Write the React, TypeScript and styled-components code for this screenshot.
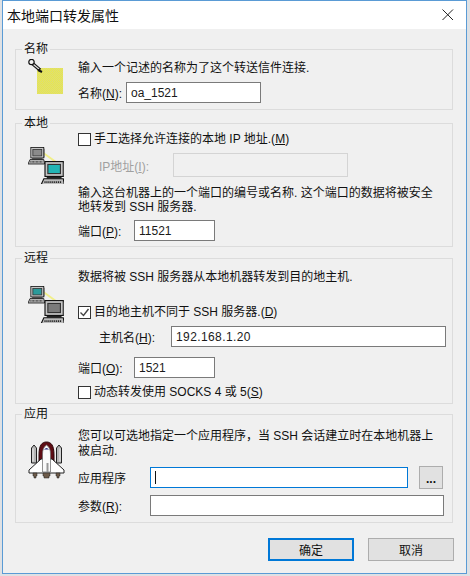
import React from "react";
import styled, { createGlobalStyle } from "styled-components";

const Global = createGlobalStyle`
    html, body { margin: 0; padding: 0; background: #dfe1e4; }
    body {
        font-family: "Liberation Sans", "Noto Sans CJK SC", sans-serif;
        font-size: 12px;
        color: #111;
    }
`;

const Computer: React.FC<{ x: number; y: number; w: number; screen: string }> = ({ x, y, w, screen }) => {
    const s = w / 21;
    return (
        <g transform={`translate(${x} ${y}) scale(${s})`}>
            <rect x="3.5" y="0.5" width="16" height="13" fill="#c6c6c6" stroke="#111" />
            <rect x="6" y="3" width="11" height="8" fill={screen} stroke="#333" />
            <rect x="19.5" y="2" width="1" height="11" fill="#555" />
            <rect x="5" y="14" width="13" height="1.5" fill="#222" />
            <path d="M2.5 15.5h17l1 5.5H0z" fill="#bbb" stroke="#111" />
            <path d="M3 18.5h15" stroke="#222" strokeWidth="1.6" strokeDasharray="1 .7" />
        </g>
    );
};

const ComputersIcon: React.FC<{ remote?: boolean }> = ({ remote }) => (
    <svg width="36" height="37" viewBox="0 0 36 37">
        <path d="M14 5 L32 18" stroke="#f1ef8a" strokeWidth="2" fill="none" />
        <Computer x={0} y={0} w={17} screen={remote ? "#2b9a9a" : "#8b8b8b"} />
        <Computer x={13} y={14} w={24} screen={remote ? "#7b7b7b" : "#22b5b5"} />
    </svg>
);

const NoteIcon = () => (
    <svg width="37" height="37" viewBox="0 0 37 37">
        <defs>
            <pattern id="dither" width="2" height="2" patternUnits="userSpaceOnUse">
                <rect width="2" height="2" fill="#e9e84c" />
                <rect width="1" height="1" fill="#dcdc78" />
                <rect x="1" y="1" width="1" height="1" fill="#dcdc78" />
            </pattern>
        </defs>
        <rect x="9" y="9" width="26" height="26" fill="url(#dither)" />
        <path d="M5 5 L12 11" stroke="#111" strokeWidth="3.500" />
        <path d="M5.500 5.500 L11 10" stroke="#ddd" strokeWidth="1.200" />
        <circle cx="3.500" cy="3" r="2.700" fill="#f2f2f2" stroke="#111" strokeWidth="1.200" />
        <path d="M10 11 L14 13" stroke="#111" strokeWidth="2" />
    </svg>
);

const ShuttleIcon = () => (
    <svg width="37" height="38" viewBox="0 0 37 38">
        <path d="M11 14 C11 4 14 1 18.500 1 C23 1 26 4 26 14 L26 22 L11 22z" fill="#5e0d14" stroke="#2a0508" />
        <path d="M6 4 L8.500 7 L8.500 22 L3.500 22 L3.500 7z" fill="#b5b5b5" stroke="#222" />
        <path d="M31 4 L33.500 7 L33.500 22 L28.500 22 L28.500 7z" fill="#b5b5b5" stroke="#222" />
        <path d="M5 7.500v13M32 7.500v13" stroke="#eee" />
        <path d="M13 18 L1 29 L1 32 L36 32 L36 29 L24 18z" fill="#fff" stroke="#222" />
        <path d="M18.500 4 C15.500 6 14.500 9 14.500 13 L14.500 31 L22.500 31 L22.500 13 C22.500 9 21.500 6 18.500 4z" fill="#fafafa" stroke="#666" strokeWidth=".7" />
        <path d="M16 8.500 Q18.500 5.500 21 8.500z" fill="#2b2b7a" />
        <rect x="18.500" y="22" width="2" height="9" fill="#999" />
        <path d="M5 32h4v3h-1v2h-2v-2h-1z M15 32h7v3h-1v2h-5v-2h-1z M28 32h4v3h-1v2h-2v-2h-1z" fill="#6d5b4a" stroke="#222" strokeWidth=".5" />
    </svg>
);

export default function App() {
    return (
        <>
            <Global />
            <Dialog>
                <TitleBar>
                    <Title>本地端口转发属性</Title>
                    <svg width="12" height="12" viewBox="0 0 12 12">
                        <path d="M.5.500 11 11M11 .5.500 11" stroke="#222" strokeWidth="1" fill="none" />
                    </svg>
                </TitleBar>

                <Body>
                    <Group $gap={6}>
                        <Legend>名称</Legend>
                        <GroupInner $top={5} $bottom={6}>
                            <IconCell $top={-2}><NoteIcon /></IconCell>
                            <Column>
                                <Text>输入一个记述的名称为了这个转送信件连接.</Text>
                                <FieldRow $top={7}>
                                    <FieldLabel $width={48}>名称(<u>N</u>):</FieldLabel>
                                    <Field $width={135} readOnly value="oa_1521" />
                                </FieldRow>
                            </Column>
                        </GroupInner>
                    </Group>

                    <Group $gap={4}>
                        <Legend>本地</Legend>
                        <GroupInner $top={2} $bottom={5}>
                            <IconCell $top={15}><ComputersIcon /></IconCell>
                            <Column>
                                <CheckRow>
                                    <CheckBox />
                                    手工选择允许连接的本地 IP 地址.(<u>M</u>)
                                </CheckRow>
                                <FieldRow $top={7} $indent={21}>
                                    <FieldLabel $width={74} $disabled>IP地址(<u>I</u>):</FieldLabel>
                                    <DisabledField />
                                </FieldRow>
                                <Text $top={9}>
                                    输入这台机器上的一个端口的编号或名称. 这个端口的数据将被安全<br />
                                    地转发到 SSH 服务器.
                                </Text>
                                <FieldRow $top={6}>
                                    <FieldLabel $width={56}>端口(<u>P</u>):</FieldLabel>
                                    <Field $width={81} readOnly value="11521" />
                                </FieldRow>
                            </Column>
                        </GroupInner>
                    </Group>

                    <Group $gap={3}>
                        <Legend>远程</Legend>
                        <GroupInner $top={5} $bottom={4}>
                            <IconCell $top={16}><ComputersIcon remote /></IconCell>
                            <Column>
                                <Text>数据将被 SSH 服务器从本地机器转发到目的地主机.</Text>
                                <CheckRow $top={21}>
                                    <CheckBox $checked>
                                        <svg width="11" height="11" viewBox="0 0 11 11">
                                            <path d="M1.500 5.500 4.500 8.500 9.500 2" stroke="#444" strokeWidth="1.400" fill="none" />
                                        </svg>
                                    </CheckBox>
                                    目的地主机不同于 SSH 服务器.(<u>D</u>)
                                </CheckRow>
                                <FieldRow $top={7} $indent={21}>
                                    <FieldLabel $width={72}>主机名(<u>H</u>):</FieldLabel>
                                    <Field $width={275} $spacing={0.4} readOnly value="192.168.1.20" />
                                </FieldRow>
                                <FieldRow $top={10}>
                                    <FieldLabel $width={56}>端口(<u>O</u>):</FieldLabel>
                                    <Field $width={81} readOnly value="1521" />
                                </FieldRow>
                                <CheckRow $top={7}>
                                    <CheckBox />
                                    动态转发使用 SOCKS 4 或 5(<u>S</u>)
                                </CheckRow>
                            </Column>
                        </GroupInner>
                    </Group>

                    <Group $gap={15}>
                        <Legend>应用</Legend>
                        <GroupInner $top={8} $bottom={6}>
                            <IconCell $top={12}><ShuttleIcon /></IconCell>
                            <Column>
                                <Text $height={15}>
                                    您可以可选地指定一个应用程序，当 SSH 会话建立时在本地机器上<br />
                                    被启动.
                                </Text>
                                <FieldRow $top={8}>
                                    <FieldLabel $width={72}>应用程序</FieldLabel>
                                    <FocusField $width={258}><Caret /></FocusField>
                                    <BrowseButton>...</BrowseButton>
                                </FieldRow>
                                <FieldRow $top={7}>
                                    <FieldLabel $width={72}>参数(<u>R</u>):</FieldLabel>
                                    <Field $width={294} readOnly value="" />
                                </FieldRow>
                            </Column>
                        </GroupInner>
                    </Group>

                    <Footer>
                        <PushButton $primary>确定</PushButton>
                        <PushButton>取消</PushButton>
                    </Footer>
                </Body>
            </Dialog>
        </>
    );
}

/* ---- Window ---- */
const Dialog = styled.div`
    box-sizing: border-box;
    width: 465px;
    height: 574px;
    margin-left: 2px;
    background: #f0f0f0;
    border: 1px solid #5a9bd5;
    overflow: hidden;
`;

const TitleBar = styled.div`
    height: 28px;
    background: #fff;
    display: flex;
    align-items: center;
    justify-content: space-between;
    padding: 0 12px 0 4px;
`;

const Title = styled.div`
    font-size: 14px;
    color: #111;
`;

const Body = styled.div`
    padding: 13px 13px 0 12px;
`;

/* ---- Group boxes ---- */
const Group = styled.fieldset<{ $gap: number }>`
    margin: 0 0 ${({ $gap }) => $gap}px;
    padding: 0;
    min-width: 0;
    border: 1px solid #dcdcdc;
`;

const Legend = styled.legend`
    margin-left: 6px;
    padding: 0 2px;
    height: 14px;
    line-height: 14px;
    font-size: 12px;
`;

const GroupInner = styled.div<{ $top: number; $bottom: number }>`
    display: grid;
    grid-template-columns: 62px 1fr;
    padding-top: ${({ $top }) => $top}px;
    padding-bottom: ${({ $bottom }) => $bottom}px;
`;

const IconCell = styled.div<{ $top: number }>`
    padding-left: 12px;
    margin-top: ${({ $top }) => $top}px;
    line-height: 0;
`;

const Column = styled.div`
    display: flex;
    flex-direction: column;
`;

/* ---- Text and rows ---- */
const Text = styled.div<{ $top?: number; $height?: number }>`
    margin-top: ${({ $top }) => $top ?? 0}px;
    line-height: ${({ $height }) => $height ?? 14}px;
    white-space: nowrap;
`;

const CheckRow = styled.div<{ $top?: number }>`
    margin-top: ${({ $top }) => $top ?? 0}px;
    height: 14px;
    line-height: 14px;
    display: flex;
    align-items: center;
    white-space: pre;
`;

const CheckBox = styled.span<{ $checked?: boolean }>`
    box-sizing: border-box;
    width: 13px;
    height: 13px;
    margin-right: 3px;
    background: #fff;
    border: 1px solid #333;
    display: flex;
    align-items: center;
    justify-content: center;
    flex: none;
`;

const FieldRow = styled.div<{ $top?: number; $indent?: number }>`
    margin-top: ${({ $top }) => $top ?? 0}px;
    margin-left: ${({ $indent }) => $indent ?? 0}px;
    display: flex;
    align-items: center;
`;

const FieldLabel = styled.label<{ $width: number; $disabled?: boolean }>`
    width: ${({ $width }) => $width}px;
    flex: none;
    white-space: nowrap;
    color: ${({ $disabled }) => ($disabled ? "#a0a0a0" : "inherit")};
`;

const Field = styled.input<{ $width: number; $spacing?: number }>`
    box-sizing: border-box;
    width: ${({ $width }) => $width}px;
    height: 21px;
    padding: 0 4px;
    background: #fff;
    border: 1px solid #7a7a7a;
    border-radius: 0;
    outline: none;
    font: inherit;
    letter-spacing: ${({ $spacing }) => $spacing ?? 0}px;
    color: #1a1a1a;
`;

const DisabledField = styled.div`
    box-sizing: border-box;
    width: 175px;
    height: 24px;
    background: #f0f0f0;
    border: 1px solid #d4d4d4;
`;

const FocusField = styled.div<{ $width: number }>`
    box-sizing: border-box;
    width: ${({ $width }) => $width}px;
    height: 21px;
    padding: 3px 4px;
    background: #fff;
    border: 1px solid #0078d7;
`;

const Caret = styled.div`
    width: 1px;
    height: 13px;
    background: #111;
`;

const BrowseButton = styled.div`
    box-sizing: border-box;
    width: 24px;
    height: 23px;
    margin: -1px 0 -1px 11px;
    background: #e1e1e1;
    border: 1px solid #adadad;
    text-align: center;
    line-height: 24px;
    font-weight: bold;
`;

/* ---- Footer ---- */
const Footer = styled.div`
    display: flex;
    justify-content: flex-end;
    gap: 14px;
    margin-right: -1px;
`;

const PushButton = styled.div<{ $primary?: boolean }>`
    box-sizing: border-box;
    width: 86px;
    height: 23px;
    background: #e1e1e1;
    border: ${({ $primary }) => ($primary ? "2px solid #0078d7" : "1px solid #adadad")};
    display: flex;
    align-items: center;
    justify-content: center;
`;
